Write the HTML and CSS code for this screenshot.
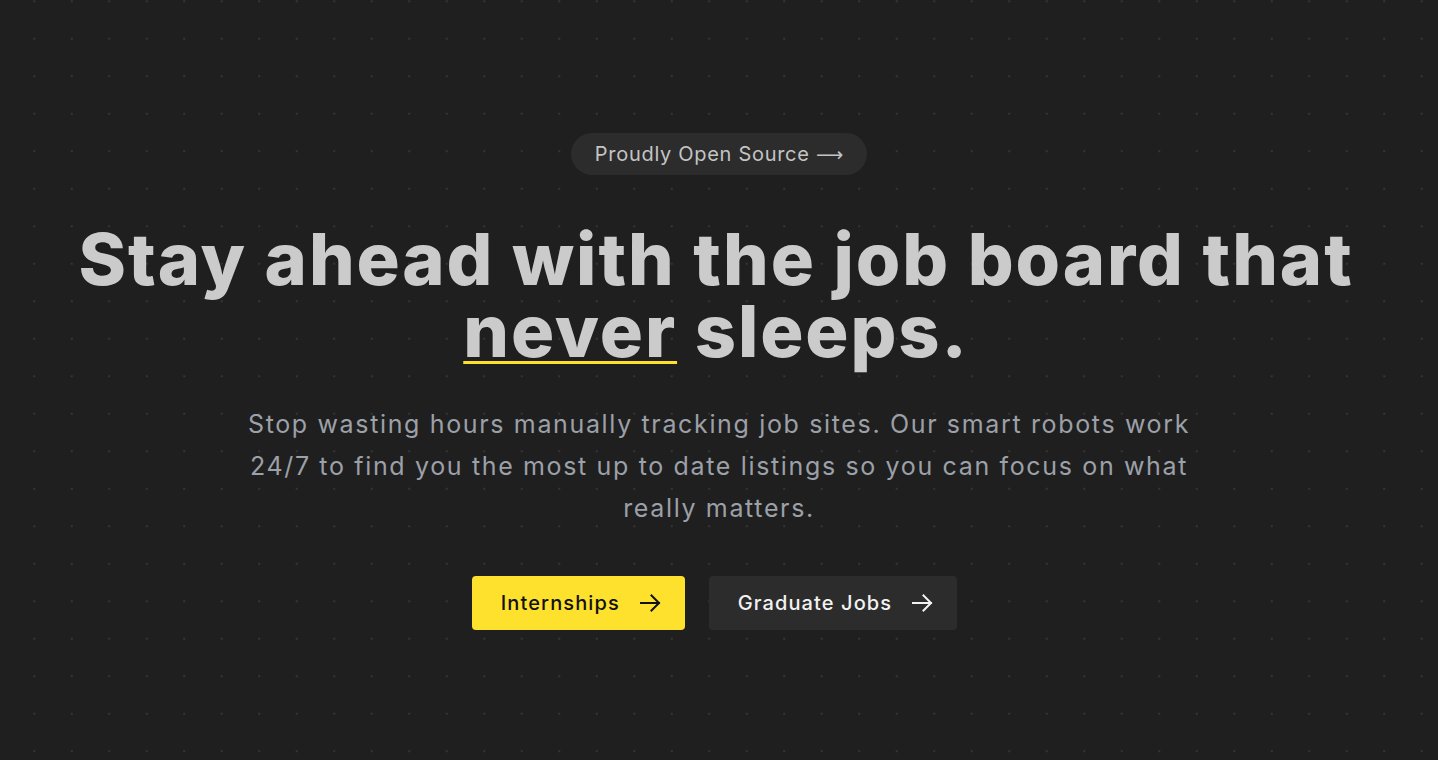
FILE: index.html
```html
<!DOCTYPE html>
<html lang="en">
<head>
<meta charset="utf-8">
<title>Job board</title>
<link rel="stylesheet" href="styles.css">
</head>
<body>
<main class="hero">
  <a class="pill" href="#">Proudly Open Source <span class="long-arrow">⟶</span></a>
  <h1 class="title">Stay ahead with the job board that <span class="under">never</span> sleeps.</h1>
  <p class="lead">Stop wasting hours manually tracking job sites. Our smart robots work 24/7 to find you the most up to date listings so you can focus on what really matters.</p>
  <div class="actions">
    <a class="btn btn-yellow" href="#">Internships
      <svg class="arrow" viewBox="0 0 24 24" fill="none" stroke="currentColor" stroke-width="2" stroke-linecap="square"><path d="M13.5 4.5 21 12l-7.5 7.5M21 12H3"/></svg>
    </a>
    <a class="btn btn-dark" href="#">Graduate Jobs
      <svg class="arrow" viewBox="0 0 24 24" fill="none" stroke="currentColor" stroke-width="2" stroke-linecap="square"><path d="M13.5 4.5 21 12l-7.5 7.5M21 12H3"/></svg>
    </a>
  </div>
</main>
</body>
</html>
```
FILE: styles.css
```css
html, body {
  margin: 0;
  padding: 0;
}
body {
  background-color: #1f1f1f;
  background-image: radial-gradient(circle, #353535 0.9px, transparent 1.4px);
  background-size: 37.5px 37.5px;
  background-position: 15.5px -17.5px;
  min-height: 760px;
  font-family: "Inter", "Open Sans", sans-serif;
  color: #cbcbcb;
}
.hero {
  display: flex;
  flex-direction: column;
  align-items: center;
  padding-top: 133px;
}
.pill {
  display: inline-flex;
  align-items: center;
  height: 42px;
  padding: 0 24px;
  border-radius: 21px;
  background: #2c2c2c;
  color: #c4c4c4;
  font-size: 20px;
  letter-spacing: 0.7px;
  text-decoration: none;
  box-sizing: border-box;
  white-space: pre;
}
.long-arrow {
  font-family: "DejaVu Sans", sans-serif;
  letter-spacing: 0;
  font-size: 19px;
}
.title {
  margin: 48px 0 0;
  padding-right: 6px;
  text-align: center;
  font-size: 72px;
  line-height: 72px;
  font-weight: 800;
  letter-spacing: 1.9px;
  color: #cbcbcb;
  max-width: 1320px;
}
.under {
  text-decoration: underline;
  text-decoration-color: #fde12d;
  text-decoration-thickness: 3px;
  text-underline-offset: 4px;
}
.lead {
  margin: 36px 0 0;
  max-width: 960px;
  text-align: center;
  font-size: 25px;
  line-height: 42px;
  letter-spacing: 1.65px;
  color: #9ca0a8;
}
.actions {
  display: flex;
  gap: 24px;
  margin-top: 47px;
  margin-right: 9px;
}
.btn {
  display: inline-flex;
  align-items: center;
  gap: 18px;
  height: 54px;
  padding: 0 23px 0 29px;
  border-radius: 4px;
  font-size: 20px;
  font-weight: 500;
  letter-spacing: 1.1px;
  text-decoration: none;
  box-sizing: border-box;
}
.btn-yellow {
  background: #fde12d;
  color: #111111;
}
.btn-dark {
  background: #2c2c2c;
  color: #f2f2f2;
}
.arrow {
  width: 24px;
  height: 24px;
}
```
